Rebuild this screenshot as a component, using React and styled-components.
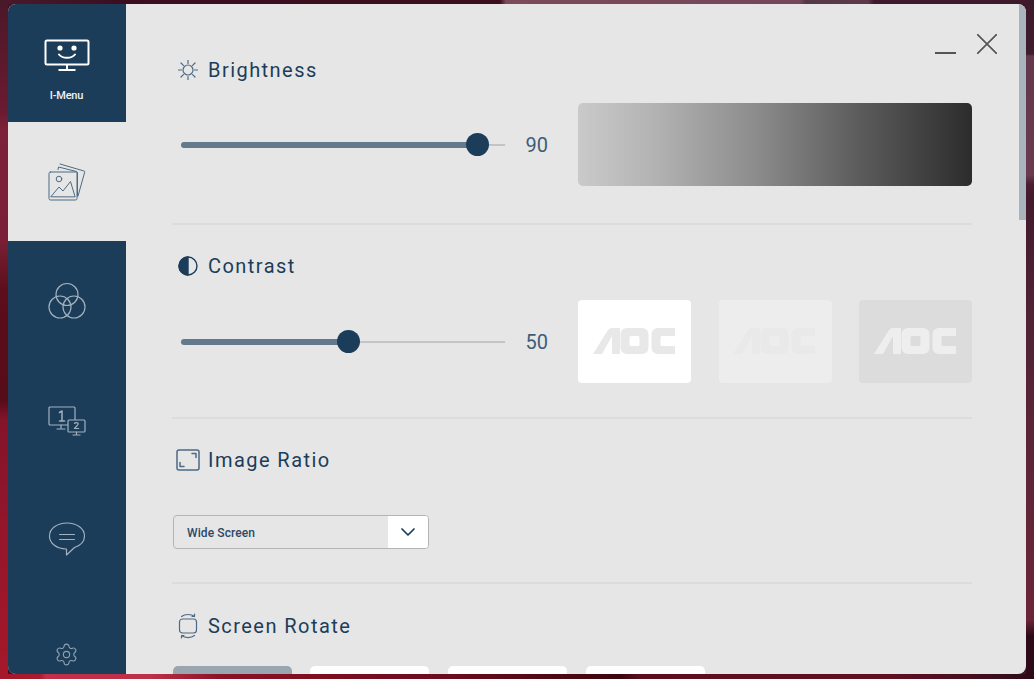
import React from 'react';
import styled, { createGlobalStyle } from 'styled-components';
import { Settings } from 'lucide-react';

const GlobalStyle = createGlobalStyle`
  html, body {
    margin: 0;
    height: 100%;
    overflow: hidden;
    font-family: Roboto, "Liberation Sans", sans-serif;
  }
  body {
    background-color: #4a1020;
    background-repeat: no-repeat;
    background-image:
      linear-gradient(to right, #4a1a2c 0, #3a0e20 120px, #3c0f20 500px, #7c4a5a 506px, #74465a 800px, #553846 806px, #5c3a4a 868px, #3e1a2c 874px, #3c1a2c 100%),
      linear-gradient(to right, #a5182b 0, #a81c30 40px, #c03048 46px, #bc3048 150px, #8a1224 220px, #6a0c1c 450px, #3c0610 620px, #5a0e20 640px, #5c1022 900px, #3a0f1e 1000px, #2c0a18 100%),
      linear-gradient(to bottom, #4a1828 0, #6a1a30 110px, #7c2238 130px, #7a2036 240px, #5c0e1a 290px, #560c18 400px, #84142a 420px, #98162a 560px, #a5182b 100%),
      linear-gradient(to bottom, #3c1a2c 0, #3e1c2e 54px, #62384a 56px, #6a3a4e 175px, #4a1c30 185px, #421a2c 200px, #4e2234 300px, #5e2638 480px, #6c2438 620px, #2c0a18 636px, #2c0a18 100%);
    background-size: 100% 4px, 100% 5px, 8px 100%, 8px 100%;
    background-position: top left, bottom left, top left, top right;
  }
`;

const Window = styled.div`
  position: relative;
  display: flex;
  width: 1018px;
  height: 670px;
  margin: 4px 8px 0;
  border-radius: 8px;
  overflow: hidden;
  background: #e6e6e6;
`;

const Sidebar = styled.nav`
  display: flex;
  flex-direction: column;
  flex: 0 0 118px;
  background: #1b3d5a;
`;

const NavItem = styled.div`
  display: flex;
  flex-direction: column;
  align-items: center;
  justify-content: center;
  flex: 0 0 119px;
  box-sizing: border-box;
  padding-right: 1px;
  background: ${props => (props.active ? '#e6e6e6' : 'transparent')};
  color: ${props => (props.active ? '#4d6a84' : '#a3b1bd')};
`;

const LogoItem = styled.div`
  display: flex;
  flex-direction: column;
  align-items: center;
  flex: 0 0 118px;
  padding-top: 35px;
  padding-right: 1px;
  box-sizing: border-box;
  color: #fff;
`;

const LogoLabel = styled.span`
  margin-top: 18px;
  font-size: 11px;
  font-weight: 500;
  letter-spacing: -0.2px;
  line-height: 13px;
  color: #f0f2f4;
`;

const SettingsItem = styled.div`
  display: flex;
  justify-content: center;
  margin-top: auto;
  padding-bottom: 7px;
  padding-right: 1px;
  color: #8fa1b0;
`;

const Main = styled.main`
  flex: 1;
  min-width: 0;
  padding-left: 46px;
`;

const Content = styled.div`
  width: 800px;
`;

const Section = styled.section`
  height: ${props => props.height}px;
  box-sizing: border-box;
  padding-top: ${props => props.top}px;
  border-bottom: ${props => (props.last ? 'none' : '2px solid #dcdcdc')};
`;

const Heading = styled.div`
  display: flex;
  align-items: center;
  height: 26px;
  padding-left: 3px;
  color: #1b3d5a;
`;

const HeadingIcon = styled.span`
  display: flex;
  align-items: center;
  justify-content: center;
  flex: 0 0 26px;
  margin-right: 7px;
  color: ${props => props.color || '#4d6a84'};
`;

const HeadingText = styled.h2`
  margin: 0;
  font-size: 20px;
  font-weight: 400;
  letter-spacing: 1.45px;
  line-height: 26px;
`;

const ControlRow = styled.div`
  display: flex;
  align-items: center;
  margin-top: ${props => props.top}px;
  padding-left: 9px;
`;

const SliderTrack = styled.div`
  position: relative;
  flex: 0 0 324px;
  height: 2px;
  background: #c2c4c6;
`;

const SliderFill = styled.div`
  position: absolute;
  left: 0;
  top: -2px;
  height: 6px;
  border-radius: 3px;
  background: #64798c;
`;

const SliderThumb = styled.div`
  position: absolute;
  top: -10.5px;
  width: 23px;
  height: 23px;
  margin-left: -11.5px;
  border-radius: 50%;
  background: #1b3d5a;
`;

const SliderValue = styled.span`
  flex: 0 0 73px;
  box-sizing: border-box;
  padding-left: 20.5px;
  font-size: 20px;
  line-height: 24px;
  color: #3f5d78;
`;

const GrayRamp = styled.div`
  flex: 0 0 394px;
  height: 83px;
  border-radius: 5px;
  background: linear-gradient(to right, #cacaca, #b2b2b2 20%, #8c8c8c 45%, #5e5e5e 70%, #2c2c2c);
`;

const Samples = styled.div`
  display: flex;
  justify-content: space-between;
  flex: 0 0 394px;
`;

const Sample = styled.div`
  display: flex;
  align-items: center;
  justify-content: center;
  width: 113px;
  height: 83px;
  padding: 0 2px 2px 0;
  box-sizing: border-box;
  border-radius: 4px;
  background: ${props => props.bg};
  color: ${props => props.logo};
`;

const Select = styled.div`
  display: flex;
  align-items: stretch;
  box-sizing: border-box;
  width: 256px;
  height: 34px;
  margin: 42px 0 0 1px;
  border: 1px solid #b4b4b4;
  border-radius: 4px;
  overflow: hidden;
`;

const SelectLabel = styled.span`
  flex: 1;
  padding-left: 13px;
  font-size: 12px;
  font-weight: 500;
  letter-spacing: 0.1px;
  line-height: 34px;
  color: #2c4a66;
`;

const SelectArrow = styled.span`
  display: flex;
  align-items: center;
  justify-content: center;
  flex: 0 0 40px;
  background: #fff;
  color: #1b3d5a;
`;

const RotateRow = styled.div`
  display: flex;
  gap: 18.7px;
  margin-top: 27px;
  padding-left: 0.6px;
`;

const RotateButton = styled.div`
  flex: 0 0 119px;
  height: 40px;
  border-radius: 5px;
  background: ${props => (props.active ? '#9aa6af' : '#fff')};
`;

const ScrollThumb = styled.div`
  position: absolute;
  top: 0;
  right: 0;
  width: 7px;
  height: 216px;
  background: #a8b5be;
`;

const WindowButton = styled.button`
  position: absolute;
  top: ${props => props.top}px;
  left: ${props => props.left}px;
  display: flex;
  padding: 0;
  border: none;
  background: none;
  color: #555;
`;

const IconStroke = styled.svg`
  display: block;
  fill: none;
  stroke: currentColor;
  stroke-linecap: round;
  stroke-linejoin: round;
`;

const ScreenSmile = () => (
  <IconStroke width="46" height="32" viewBox="0 0 46 32" strokeWidth="2">
    <rect x="1.5" y="1.5" width="43" height="24" rx="1.5" />
    <circle cx="16" cy="9" r="2.6" fill="currentColor" stroke="none" />
    <circle cx="30" cy="9" r="2.6" fill="currentColor" stroke="none" />
    <path d="M15 15.5c3.5 4.4 12.5 4.4 16 0" />
    <path d="M23 25.5v5M14.5 31h17" strokeLinecap="butt" />
  </IconStroke>
);

const Photos = () => (
  <IconStroke width="38" height="38" viewBox="0 0 38 38" strokeWidth="1">
    <rect x="1" y="9" width="28" height="28" rx="1.5" />
    <path d="M10 6.5 10.5 4 28.5 8.5a1.5 1.5 0 0 1 1 1.5V33" />
    <path d="M12 1 36 8a1 1 0 0 1 .7 1.2L30 33" />
    <path d="M3 33.5 11 24l4 4 7.5-9.5L27 33.5Z" />
    <circle cx="11" cy="16" r="2.8" />
  </IconStroke>
);

const ColorCircles = () => (
  <IconStroke width="38" height="38" viewBox="0 0 38 38" strokeWidth="1.2">
    <circle cx="19" cy="12.5" r="11" />
    <circle cx="12" cy="25" r="11" />
    <circle cx="26" cy="25" r="11" />
  </IconStroke>
);

const Displays = () => (
  <IconStroke width="38" height="34" viewBox="0 -3 38 34" strokeWidth="1.2">
    <rect x="1" y="1" width="26" height="18" rx="1" />
    <path d="M13 19v3M9 23h8" />
    <path d="M11.500 6.500 14 5v10M11.500 15h5" strokeWidth="1.5" />
    <rect x="20" y="14" width="17" height="12" rx="1" fill="#1b3d5a" />
    <path d="M28.5 26v2M25 29h7" />
    <path d="M26.500 17.500c.5-1.200 3.500-1.200 3.800.2.2 1.400-3 3-3.800 4.800h4.200" strokeWidth="1.2" />
  </IconStroke>
);

const Chat = () => (
  <IconStroke width="38" height="34" viewBox="0 0 38 34" strokeWidth="1.2">
    <path d="M19 1C9 1 1.5 6.5 1.5 14S9 27 18 27h.5l0 6 8-7.5C32.500 23.500 36.500 19.500 36.500 14 36.500 6.500 29 1 19 1Z" />
    <path d="M11.500 12.500h15M11.500 17.500h15" />
  </IconStroke>
);

const Sun = () => (
  <IconStroke width="20" height="20" viewBox="0 0 20 20" strokeWidth="1.2">
    <circle cx="10" cy="10" r="5" />
    <path d="M10 0v3.500M10 16.500V20M0 10h3.500M16.500 10H20M3 3l2.400 2.400M14.600 14.600 17 17M17 3l-2.400 2.400M5.400 14.600 3 17" />
  </IconStroke>
);

const ContrastIcon = () => (
  <IconStroke width="20" height="20" viewBox="0 0 20 20" strokeWidth="1.4">
    <circle cx="10" cy="10" r="9" />
    <path d="M10 1a9 9 0 0 0 0 18Z" fill="currentColor" />
  </IconStroke>
);

const RatioIcon = () => (
  <IconStroke width="24" height="22" viewBox="0 0 24 22" strokeWidth="1.5">
    <rect x="1" y="1" width="22" height="20" rx="2" />
    <path d="M16 4.500h4v4M4 13.500v4h4" />
  </IconStroke>
);

const RotateIcon = () => (
  <IconStroke width="20" height="26" viewBox="0 0 20 26" strokeWidth="1.2">
    <rect x="1.500" y="6" width="17" height="14" rx="3" />
    <path d="M3.500 3.500C7 .8 13 .8 16.500 3.500M16.500 3.500V1M16.500 3.500h-2.500" />
    <path d="M16.500 22.500C13 25.200 7 25.200 3.500 22.500M3.500 22.500V25M3.500 22.500H6" />
  </IconStroke>
);

const ChevronDown = () => (
  <IconStroke width="14" height="8" viewBox="0 0 14 8" strokeWidth="1.7">
    <path d="M1 1l6 6 6-6" />
  </IconStroke>
);

// AOC wordmark, drawn as a logo shape
const AocLogo = () => (
  <svg width="82" height="28" viewBox="0 0 82 28" fill="currentColor">
    <path d="M0 27 15 3Q16.500 1 19 1h8v26h-8V9L9 27Z" />
    <path fillRule="evenodd" d="M35 1h13c5 0 7.500 2.500 7.500 7v12c0 4.500-2.500 7-7.500 7H35c-5 0-7.500-2.500-7.500-7V8c0-4.500 2.500-7 7.500-7Zm3 8q-1.500 0-1.500 1.500v7q0 1.500 1.500 1.500h7q1.500 0 1.500-1.500v-7q0-1.500-1.500-1.500Z" />
    <path d="M66 1h16v8H69q-1.500 0-1.500 1.500v7q0 1.500 1.500 1.500h13v8H66c-5 0-7.500-2.500-7.500-7V8c0-4.500 2.500-7 7.500-7Z" />
  </svg>
);

const Slider = ({ value }) => (
  <SliderTrack>
    <SliderFill style={{ width: `${value}%` }} />
    <SliderThumb style={{ left: `${value}%` }} />
  </SliderTrack>
);

const samples = [
  { bg: '#ffffff', logo: '#e8e8e8' },
  { bg: '#ededed', logo: '#e9e9e9' },
  { bg: '#dcdcdc', logo: '#eeeeee' },
];

export default function App() {
  return (
    <>
      <GlobalStyle />
      <Window>
        <Sidebar>
          <LogoItem>
            <ScreenSmile />
            <LogoLabel>I-Menu</LogoLabel>
          </LogoItem>
          <NavItem active><Photos /></NavItem>
          <NavItem><ColorCircles /></NavItem>
          <NavItem><Displays /></NavItem>
          <NavItem><Chat /></NavItem>
          <SettingsItem><Settings size={25} strokeWidth={1.05} /></SettingsItem>
        </Sidebar>
        <Main>
          <Content>
            <Section height={221} top={53}>
              <Heading>
                <HeadingIcon><Sun /></HeadingIcon>
                <HeadingText>Brightness</HeadingText>
              </Heading>
              <ControlRow top={20}>
                <Slider value={91.5} />
                <SliderValue>90</SliderValue>
                <GrayRamp />
              </ControlRow>
            </Section>
            <Section height={194} top={28}>
              <Heading>
                <HeadingIcon color="#1b3d5a"><ContrastIcon /></HeadingIcon>
                <HeadingText>Contrast</HeadingText>
              </Heading>
              <ControlRow top={21}>
                <Slider value={51.7} />
                <SliderValue>50</SliderValue>
                <Samples>
                  {samples.map(sample => (
                    <Sample key={sample.bg} bg={sample.bg} logo={sample.logo}>
                      <AocLogo />
                    </Sample>
                  ))}
                </Samples>
              </ControlRow>
            </Section>
            <Section height={165} top={28}>
              <Heading>
                <HeadingIcon><RatioIcon /></HeadingIcon>
                <HeadingText>Image Ratio</HeadingText>
              </Heading>
              <Select>
                <SelectLabel>Wide Screen</SelectLabel>
                <SelectArrow><ChevronDown /></SelectArrow>
              </Select>
            </Section>
            <Section height={100} top={29} last>
              <Heading>
                <HeadingIcon><RotateIcon /></HeadingIcon>
                <HeadingText>Screen Rotate</HeadingText>
              </Heading>
              <RotateRow>
                <RotateButton active />
                <RotateButton />
                <RotateButton />
                <RotateButton />
              </RotateRow>
            </Section>
          </Content>
        </Main>
        <ScrollThumb />
        <WindowButton top={46} left={927} aria-label="Minimize">
          <IconStroke width="21" height="6" viewBox="0 0 21 6" strokeWidth="2">
            <path d="M0 3h21" strokeLinecap="butt" />
          </IconStroke>
        </WindowButton>
        <WindowButton top={30} left={969} aria-label="Close">
          <IconStroke width="20" height="20" viewBox="0 0 20 20" strokeWidth="1.7">
            <path d="M0 0l20 20M20 0 0 20" strokeLinecap="butt" />
          </IconStroke>
        </WindowButton>
      </Window>
    </>
  );
}
